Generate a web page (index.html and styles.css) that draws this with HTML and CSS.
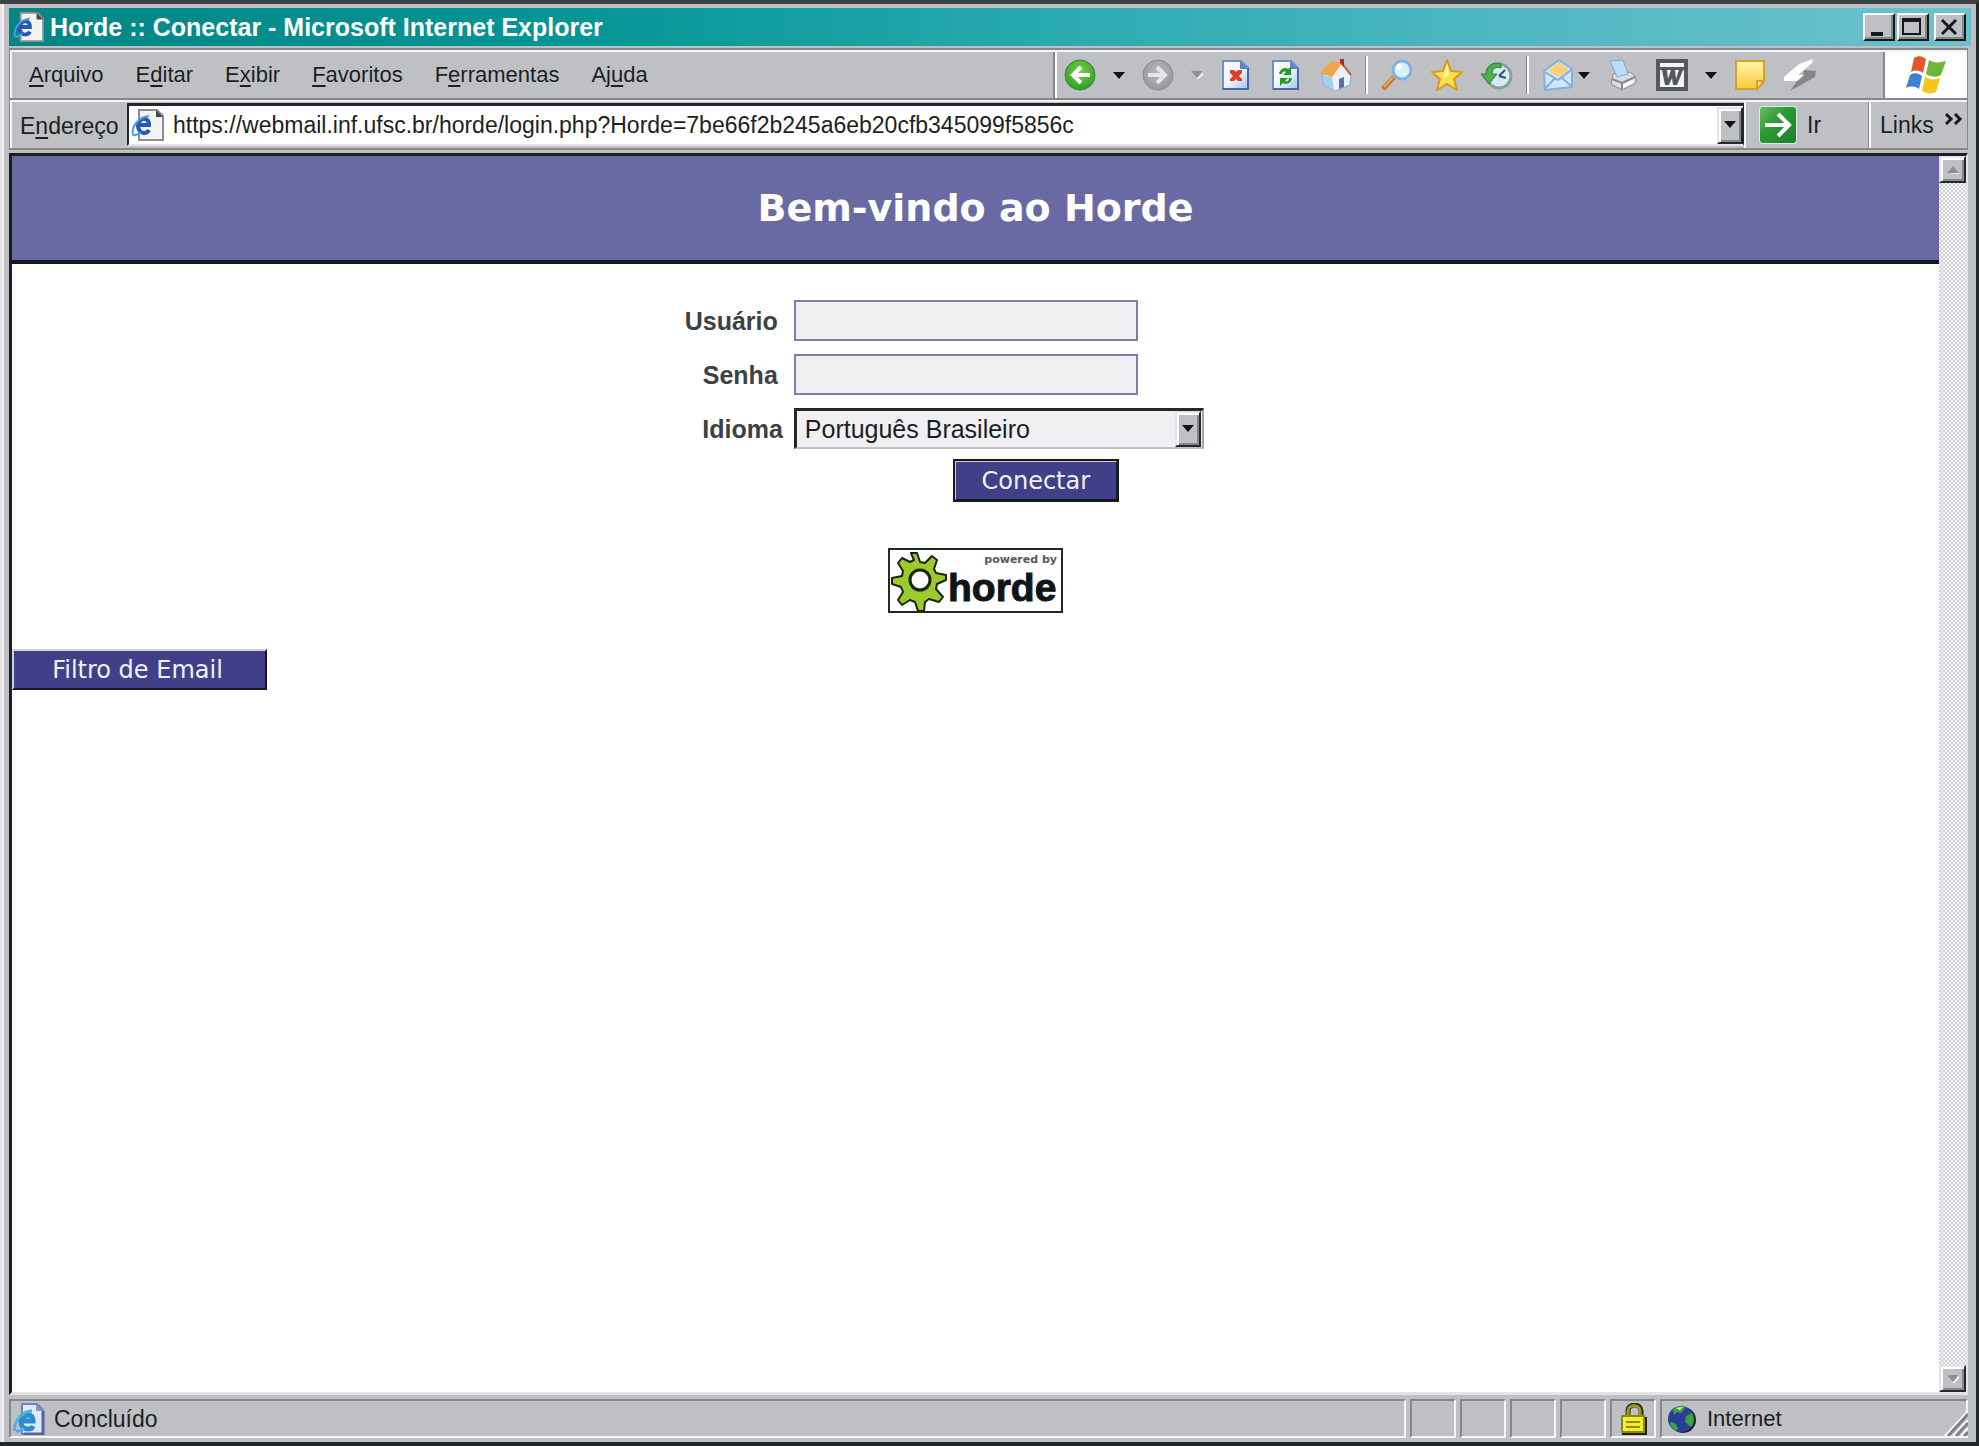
FILE: index.html
```html
<!DOCTYPE html>
<html lang="pt-BR">
<head>
<meta charset="utf-8">
<title>Horde :: Conectar - Microsoft Internet Explorer</title>
<link rel="stylesheet" href="styles.css">
</head>
<body>
<svg class="defs" aria-hidden="true">
  <defs>
    <linearGradient id="sheet" x1="0" y1="0" x2="1" y2="1"><stop offset="0" stop-color="#fff"/><stop offset=".5" stop-color="#f2f7fd"/><stop offset="1" stop-color="#9cc4f0"/></linearGradient>
    <radialGradient id="green" cx=".5" cy=".35" r=".7"><stop offset="0" stop-color="#6fd04a"/><stop offset="1" stop-color="#2c9a22"/></radialGradient>
    <radialGradient id="grey" cx=".5" cy=".4" r=".7"><stop offset="0" stop-color="#b8b9bc"/><stop offset="1" stop-color="#919296"/></radialGradient>
    <linearGradient id="gold" x1="0" y1="0" x2="0" y2="1"><stop offset="0" stop-color="#fff7a8"/><stop offset="1" stop-color="#f8c83c"/></linearGradient>
    <linearGradient id="go" x1="0" y1="0" x2="1" y2="1"><stop offset="0" stop-color="#6db96a"/><stop offset=".4" stop-color="#2f9a35"/><stop offset="1" stop-color="#1d7f28"/></linearGradient>
    <symbol id="page-e" viewBox="0 0 34 34">
      <path d="M8 2h18l6 6v24H8z" fill="#f4f4ee" stroke="#8b8d90" stroke-width="2"/>
      <path d="M25 2v7h7z" fill="#45494c"/>
      <path d="M7 17h11c0-4-2-6-5-6s-6 3-6 7 3 7 6 7 4-1 5-3" fill="none" stroke="#2557b4" stroke-width="4"/>
      <path d="M2 27C0 18 8 9 18 8M2 27c3 1 6-1 8-3" fill="none" stroke="#4d9be4" stroke-width="2"/>
    </symbol>
    <symbol id="page-blue" viewBox="0 0 32 32">
      <path d="M3 2h18l7 7v21H3z" fill="url(#sheet)" stroke="#6a8fd0" stroke-width="2"/>
      <path d="M28 9v21H3" fill="none" stroke="#4d66b0" stroke-width="2"/>
      <path d="M20 2v8h8z" fill="#5f7fc6"/>
    </symbol>
  </defs>
</svg>

<div class="window">
  <header class="titlebar">
    <svg class="title-icon" viewBox="0 0 34 34"><use href="#page-e"/></svg>
    <span class="title-text">Horde :: Conectar - Microsoft Internet Explorer</span>
    <div class="window-buttons">
      <button class="win-button" type="button" aria-label="Minimizar"><svg viewBox="0 0 26 22"><path d="M6 16h12v4H6z" fill="#16191c"/></svg></button>
      <button class="win-button" type="button" aria-label="Maximizar"><svg viewBox="0 0 26 22"><path d="M4 3h17v15H4z" fill="none" stroke="#16191c" stroke-width="2"/><path d="M3 2h19v4H3z" fill="#16191c"/></svg></button>
      <button class="win-button win-close" type="button" aria-label="Fechar"><svg viewBox="0 0 26 22"><path d="M6 4l14 14M20 4L6 18" stroke="#16191c" stroke-width="3"/></svg></button>
    </div>
  </header>

  <div class="bars">
    <div class="bar-row menu-row">
      <nav class="menu">
        <a href="#"><u>A</u>rquivo</a>
        <a href="#">E<u>d</u>itar</a>
        <a href="#">E<u>x</u>ibir</a>
        <a href="#"><u>F</u>avoritos</a>
        <a href="#">F<u>e</u>rramentas</a>
        <a href="#">Aj<u>u</u>da</a>
      </nav>
      <div class="toolbar">
        <button class="tool" type="button" aria-label="Voltar"><svg viewBox="0 0 32 32"><circle cx="16" cy="16" r="15" fill="url(#green)" stroke="#2c8a2a"/><path d="M26 16H9M17 8l-8 8 8 8" fill="none" stroke="#fff" stroke-width="4"/></svg></button>
        <button class="drop" type="button" aria-label="Histórico de voltar"><svg viewBox="0 0 14 8"><path d="M1 1h12L7 8z" fill="#111417"/></svg></button>
        <button class="tool" type="button" aria-label="Avançar"><svg viewBox="0 0 32 32"><circle cx="16" cy="16" r="15" fill="url(#grey)" stroke="#8b8c90"/><path d="M6 16h17M15 8l8 8-8 8" fill="none" stroke="#e6e6e9" stroke-width="4"/></svg></button>
        <button class="drop" type="button" aria-label="Histórico de avançar"><svg viewBox="0 0 14 8"><path d="M13 2v2L8 8H6z" fill="#fff"/><path d="M1 0h11L7 7z" fill="#8e8f92"/></svg></button>
        <div class="tool-group">
          <button class="tool" type="button" aria-label="Parar"><svg viewBox="0 0 32 32"><use href="#page-blue"/><path d="M10 11h4l2 2 2-2h4v3l-3 3 3 3v2h-4l-2-2-2 2h-4v-2l3-3-3-3z" fill="#dc3f26"/></svg></button>
          <button class="tool" type="button" aria-label="Atualizar"><svg viewBox="0 0 32 32"><use href="#page-blue"/><path d="M9 15c1-6 7-7 9-5l3-2v8h-8l3-3c-2-1-4 0-4 2zM22 19c-1 6-7 7-9 5l-3 3v-8h8l-3 3c2 1 4 0 4-3z" fill="#28992f"/></svg></button>
          <button class="tool" type="button" aria-label="Página inicial"><svg viewBox="0 0 32 32"><path d="M2 15l9 1 10-12 10 13-1 9-15 6-11-6z" fill="#e9f1fb" stroke="#7fa9d6"/><path d="M3 16l9 2 2 13-10-6z" fill="#9fd0ee"/><path d="M0 14L11 2l11 2-10 14z" fill="#f2a545"/><path d="M21 3l10 13" stroke="#b9602c" stroke-width="2"/><path d="M20 0h4v8l-4-4z" fill="#b03022"/><path d="M19 20l5-2v10l-5 2z" fill="#5b6fae"/></svg></button>
        </div>
        <span class="tool-sep"></span>
        <div class="tool-group">
          <button class="tool" type="button" aria-label="Pesquisar"><svg viewBox="0 0 32 32"><path d="M2 30l11-12" stroke="#c7763a" stroke-width="5"/><path d="M3 28l9-10" stroke="#eaa768" stroke-width="2"/><circle cx="21" cy="11" r="9" fill="#d4f1fc" stroke="#86aede" stroke-width="3"/><circle cx="18" cy="8" r="3" fill="#fff"/></svg></button>
          <button class="tool" type="button" aria-label="Favoritos"><svg viewBox="0 0 32 32"><path d="M16 1l4 11 11 1-8 7 3 11-10-6-10 6 3-11-8-7 11-1z" fill="#ffe24a" stroke="#d99a23" stroke-width="2"/><path d="M16 5l2 10-6 5z" fill="#fff9b8"/></svg></button>
          <button class="tool" type="button" aria-label="Histórico"><svg viewBox="0 0 32 32"><circle cx="18" cy="17" r="12" fill="#d2ecf7" stroke="#8d9ca6" stroke-width="3"/><path d="M18 17l6-6M18 17l7 2" stroke="#36536b" stroke-width="2"/><path d="M20 5C12 2 5 7 5 15H0l8 10 8-10h-5c0-5 4-8 9-6z" fill="#4fb04a" stroke="#2a7e35"/></svg></button>
        </div>
        <span class="tool-sep"></span>
        <button class="tool" type="button" aria-label="Correio"><svg viewBox="0 0 32 32"><path d="M2 12L17 1l13 9v18L3 31z" fill="#cfe6fa" stroke="#86aede" stroke-width="2"/><path d="M6 12L17 3l10 8-11 7z" fill="#f8d078"/><path d="M3 13l13 8 13-10M3 30l10-11M29 27l-10-9" fill="none" stroke="#86aede" stroke-width="2"/></svg></button>
        <button class="drop drop-near" type="button" aria-label="Opções de correio"><svg viewBox="0 0 14 8"><path d="M1 1h12L7 8z" fill="#111417"/></svg></button>
        <div class="tool-group">
          <button class="tool" type="button" aria-label="Imprimir"><svg viewBox="0 0 32 32"><path d="M7 15l17-2 6 5v6l-14 7-11-6z" fill="#dcdde0" stroke="#8a8b8f"/><path d="M4 2l13-1 5 14-11 3z" fill="#b9ddfa" stroke="#79a6dd"/><path d="M6 20l10 4 13-6M16 24v6" fill="none" stroke="#8a8b8f" stroke-width="2"/><path d="M17 26l10-5v3l-10 5z" fill="#fff"/></svg></button>
          <button class="tool" type="button" aria-label="Editar com Word"><svg viewBox="0 0 32 32"><path d="M0 0h32v32H0z" fill="#55595c"/><path d="M4 4h24v4H4zM4 11h24v17H4z" fill="#f4f4f6"/><path d="M6 11h5l1 9 3-9h4l1 9 3-9h4l-6 15h-4l-1-7-3 7H9z" fill="#55595c"/></svg></button>
        </div>
        <button class="drop" type="button" aria-label="Opções de edição"><svg viewBox="0 0 14 8"><path d="M1 1h12L7 8z" fill="#111417"/></svg></button>
        <div class="tool-group">
          <button class="tool" type="button" aria-label="Discutir"><svg viewBox="0 0 32 32"><path d="M2 2h28v21l-7 7H2z" fill="url(#gold)" stroke="#d8a02c" stroke-width="2"/><path d="M30 22h-7v8z" fill="#fff2a0" stroke="#d8a02c" stroke-width="2"/></svg></button>
          <button class="tool" type="button" aria-label="Messenger"><svg viewBox="0 0 32 32"><path d="M20 11l12 1-1 6L6 32l7-10 6-5z" fill="#85868a"/><path d="M29 0L15 5 0 18v4h13l7-6h-6L28 4z" fill="#fff"/></svg></button>
        </div>
      </div>
      <div class="brand">
        <svg viewBox="0 0 42 38"><path d="M9 2c4-3 9-2 12 1l-3 14c-4-3-8-3-12-1z" fill="#e4572e"/><path d="M24 4c5 3 9 3 17 1l-5 14c-5 3-10 2-15-1z" fill="#6fb638"/><path d="M5 19c4-3 9-2 12 1l-3 13c-4-3-8-3-13-1z" fill="#3f80d2"/><path d="M20 21c5 3 9 3 15 1l-4 14c-5 2-9 2-14-1z" fill="#f9c31d"/></svg>
      </div>
    </div>

    <form class="bar-row address-row" onsubmit="return false">
      <label class="address-label" for="address">E<u>n</u>dereço</label>
      <div class="address-box">
        <svg class="address-icon" viewBox="0 0 34 34"><use href="#page-e"/></svg>
        <input class="address-input" id="address" type="text" value="https://webmail.inf.ufsc.br/horde/login.php?Horde=7be66f2b245a6eb20cfb345099f5856c">
        <button class="bevel combo-button" type="button" aria-label="Mostrar endereços"><svg class="combo-arrow" viewBox="0 0 12 8"><path d="M0 0h12L6 7z" fill="#111417"/></svg></button>
      </div>
      <button class="go-button" type="submit"><svg viewBox="0 0 40 40"><rect x="1" y="1" width="38" height="38" rx="4" fill="#dcecdc"/><rect x="2" y="2" width="36" height="36" rx="3" fill="url(#go)"/><path d="M7 20h23M20 9l11 11-11 11" fill="none" stroke="#fff" stroke-width="4"/></svg>Ir</button>
      <a class="links" href="#">Links<svg viewBox="0 0 18 12"><path d="M1 1l5 5-5 5M10 1l5 5-5 5" fill="none" stroke="#16191c" stroke-width="3"/></svg></a>
    </form>
  </div>

  <div class="viewport">
    <main class="page">
      <h1 class="banner">Bem-vindo ao Horde</h1>
      <form class="login" onsubmit="return false">
        <label class="login-label spaced" for="user">Usuário</label>
        <input class="field" id="user" type="text">
        <label class="login-label spaced" for="pass">Senha</label>
        <input class="field" id="pass" type="password">
        <label class="login-label" for="lang">Idioma</label>
        <div class="language">
          <select class="language-select" id="lang"><option>Português Brasileiro</option></select>
          <span class="bevel language-arrow"><svg class="combo-arrow" viewBox="0 0 12 8"><path d="M0 0h12L6 7z" fill="#111417"/></svg></span>
        </div>
        <button class="page-button connect" type="submit">Conectar</button>
      </form>
      <a class="powered" href="#">
        <svg class="powered-gear" viewBox="0 0 58 61">
          <path d="M21 3h6l3 9 5 1 7-7 5 4-3 9 2 4 10 2v5l-9 4-1 5 7 8-4 5-10-3-4 3-1 9h-6l-3-9-5-2-8 5-4-5 5-8-2-5-9-3v-6l10-2 1-5-5-8 4-5 8 4 4-2z" fill="#9aca2b" stroke="#1b2410" stroke-width="2" stroke-linejoin="round"/>
          <circle cx="30" cy="30" r="10" fill="#fff" stroke="#1b2410" stroke-width="3"/>
        </svg>
        <span class="powered-words">
          <span class="powered-small">powered by</span>
          <span class="powered-name">horde</span>
        </span>
      </a>
      <button class="page-button filter" type="button">Filtro de Email</button>
    </main>
    <div class="scrollbar">
      <button class="bevel scroll-button" type="button" aria-label="Rolar para cima"><svg class="combo-arrow" viewBox="0 0 12 8"><path d="M1 8h11V7z" fill="#fff"/><path d="M0 7h12L6 0z" fill="#8e8f92"/></svg></button>
      <button class="bevel scroll-button" type="button" aria-label="Rolar para baixo"><svg class="combo-arrow" viewBox="0 0 12 8"><path d="M12 1v2L7 8H5z" fill="#fff"/><path d="M0 0h11L6 7z" fill="#8e8f92"/></svg></button>
    </div>
  </div>

  <footer class="status">
    <div class="status-cell status-main">
      <svg class="status-icon" viewBox="0 0 32 32"><path d="M9 1h15l6 6v24H9z" fill="#dceafd" stroke="#6d83bd" stroke-width="2"/><path d="M30 8v23H11" fill="none" stroke="#56659b" stroke-width="3"/><path d="M23 1v7h7z" fill="#7f95cc"/><path d="M8 18h12c0-4-2-6-5-6s-7 3-7 7 3 7 7 7 4-1 5-3" fill="none" stroke="#2a8ccb" stroke-width="5"/><path d="M2 28C0 19 9 8 19 8M3 28c3 1 6-1 8-3" fill="none" stroke="#4fb1e6" stroke-width="3"/></svg>
      Concluído
    </div>
    <div class="status-cell"></div>
    <div class="status-cell"></div>
    <div class="status-cell"></div>
    <div class="status-cell"></div>
    <div class="status-cell">
      <svg class="status-icon" viewBox="0 0 32 32"><path d="M10 16V8c0-8 13-8 13 0v8" fill="none" stroke="#33340f" stroke-width="5"/><path d="M10 16V8c0-7 12-7 12 0v8" fill="none" stroke="#9c962b" stroke-width="3"/><path d="M4 14h25v18H4z" fill="#22240f"/><path d="M4 13h22v16H4z" fill="#f4ee22" stroke="#8d8820" stroke-width="2"/><path d="M8 19h14M8 24h14" stroke="#8d8820" stroke-width="2"/></svg>
    </div>
    <div class="status-cell status-zone">
      <svg class="status-icon" viewBox="0 0 32 32"><circle cx="17" cy="17" r="13" fill="#1e1f3c"/><circle cx="15" cy="16" r="13" fill="#2b3e97"/><path d="M7 7c4-5 10-5 13-3l-5 6-4-1-3 3zM20 13l6-3c3 6 2 11-1 14l-6-5zM4 19l5 1 3 5-2 3c-4-2-6-5-6-9z" fill="#35a53c"/><path d="M10 5l7-1-3 3z" fill="#d8efe0"/></svg>
      Internet
      <svg class="grip" viewBox="0 0 24 28"><path d="M0 28L24 2v26z" fill="#bfc0c4"/><path d="M1 28L24 3M9 28L24 12M17 28l7-8" stroke="#fff" stroke-width="2"/><path d="M4 28L24 6M12 28l12-13M20 28l4-4" stroke="#808286" stroke-width="3"/></svg>
    </div>
  </footer>
</div>
</body>
</html>
```

FILE: styles.css
```css
* { box-sizing: border-box; }

body {
  margin: 0;
  background: #bfc0c4;
  color: #1b1f23;
  font: 22px/28px "Liberation Sans", Arial, sans-serif;
}

button, input, select { margin: 0; padding: 0; font: inherit; color: inherit; border-radius: 0; }
button { border: 0; background: none; }
a { color: inherit; text-decoration: none; }
u { text-decoration-thickness: 2px; text-underline-offset: 3px; text-decoration-skip-ink: none; }
svg { display: block; flex: none; }
.defs { position: absolute; width: 0; height: 0; }

.window {
  display: flex;
  flex-direction: column;
  min-height: 100vh;
  padding: 4px 5px 4px 9px;
  border: solid #22282c;
  border-width: 4px 3px 4px 0;
  border-top-color: #3b4347;
  box-shadow: inset 2px 0 #e4e4e8, inset 4px 0 #f4f4f7;
}

/* Raised grey box shared by small buttons */
.bevel {
  display: flex;
  align-items: center;
  justify-content: center;
  background: #bfc0c4;
  border: 2px solid;
  border-color: #e4e4e8 #22282c #22282c #e4e4e8;
  box-shadow: inset 2px 2px #fff, inset -2px -2px #85888b;
}
.combo-arrow { width: 12px; height: 8px; }

/* Title bar */
.titlebar {
  display: flex;
  align-items: center;
  height: 38px;
  padding: 0 5px 0 4px;
  background: linear-gradient(90deg, #028684 0%, #059696 30%, #2cabb2 55%, #4eb7c2 76%, #6cc2cd 100%);
  color: #fff;
}
.title-icon { width: 32px; height: 32px; }
.title-text { flex: 1; padding-left: 5px; font-size: 25px; font-weight: bold; white-space: nowrap; }
.window-buttons { display: flex; gap: 2px; }
.win-button {
  width: 32px;
  height: 28px;
  background: #bfc0c4;
  border: 2px solid;
  border-color: #fff #16191c #16191c #fff;
  box-shadow: inset -2px -2px #85888b;
}
.win-button svg { width: 26px; height: 22px; }
.win-close { margin-left: 3px; }

/* Menu and tool bars */
.bars { margin: 2px 3px 0 0; border: solid #85888b; border-width: 2px 1px 0 1px; }
.bar-row { display: flex; border: solid #85888b; border-width: 0 0 2px; box-shadow: inset 2px 2px #f4f4f7; }
.menu-row { height: 50px; padding-top: 2px; }
.menu { display: flex; flex: 1; align-items: center; gap: 32px; padding-left: 19px; }

.toolbar {
  display: flex;
  align-items: center;
  width: 832px;
  padding-left: 9px;
  border: solid #85888b;
  border-width: 0 2px;
  box-shadow: inset 2px 0 #fff;
}
.tool-group { display: flex; gap: 18px; }
.tool { width: 32px; height: 32px; }
.tool svg { width: 32px; height: 32px; }
.drop { display: flex; justify-content: center; width: 46px; padding: 12px 0; }
.drop svg { width: 14px; height: 8px; }
.drop-near { width: 32px; padding-right: 12px; }
.tool-sep { width: 3px; height: 38px; margin: 0 13px; border-left: 1px solid #85888b; background: #fff; }
.brand { display: flex; align-items: center; justify-content: center; width: 82px; background: #fff; }
.brand svg { width: 42px; height: 38px; }

.address-row { height: 50px; padding-top: 2px; align-items: stretch; font-size: 23px; }
.address-label { width: 117px; padding: 10px 0 0 10px; }
.address-box {
  display: flex;
  flex: 1;
  align-items: center;
  margin: 1px 0 2px;
  padding-left: 2px;
  background: #fff;
  border: solid #22282c;
  border-width: 3px 1px 2px 2px;
  border-bottom-color: #e4e4e8;
}
.address-icon { width: 34px; height: 34px; }
.address-input { flex: 1; min-width: 0; height: 36px; padding: 0 0 0 8px; border: 0; outline: 0; background: #fff; }
.combo-button { width: 26px; height: 37px; }
.go-button { display: flex; align-items: center; gap: 9px; width: 125px; padding-left: 12px; border-left: 2px solid #f4f4f7; border-right: 1px solid #85888b; }
.go-button svg { width: 40px; height: 40px; }
.links { display: flex; gap: 11px; width: 98px; padding: 9px 0 0 9px; border-left: 2px solid #fff; }
.links svg { width: 18px; height: 12px; margin-top: 2px; }

/* Document area */
.viewport {
  display: flex;
  flex: 1;
  margin: 3px 3px 0 0;
  background: #fff;
  border: 3px solid #1b1f23;
  border-right: 2px solid #e4e4e8;
  border-bottom-color: #e4e4e8;
}
.page { flex: 1; }
.banner {
  margin: 0;
  padding: 28px 0;
  background: #696aa4;
  border-bottom: 4px solid #16191c;
  color: #fff;
  font: bold 38px/48px "DejaVu Sans", Verdana, sans-serif;
  text-align: center;
}
.login { display: grid; grid-template-columns: 40% 1fr; gap: 13px 11px; align-items: center; justify-items: start; padding-top: 36px; }
.login-label { justify-self: end; color: #3b4145; font-size: 25px; font-weight: bold; }
.spaced { padding-right: 5px; }
.field { width: 344px; height: 41px; padding: 0 6px; background: #f0f0f3; border: 2px solid #7b7cb0; outline: 0; }
.language { position: relative; }
.language-select {
  display: block;
  appearance: none;
  width: 410px;
  height: 41px;
  padding: 0 36px 0 8px;
  background: #f0f0f3;
  border: 3px solid #22282c;
  border-right: 2px solid #a5a6aa;
  border-bottom: 2px solid #bfc0c4;
  color: #1b1f23;
  font-size: 25px;
}
.language-arrow { position: absolute; top: 3px; right: 3px; bottom: 2px; width: 26px; pointer-events: none; }
.page-button {
  height: 41px;
  background: #403f88;
  border: 2px solid;
  border-color: #d0d0d8 #16191c #16191c #d0d0d8;
  color: #f0f0fa;
  font: 24px/28px "DejaVu Sans", Verdana, sans-serif;
}
.connect { grid-column: 2; width: 164px; margin: -2px 0 0 160px; outline: 2px solid #16191c; outline-offset: -1px; }
.powered { display: flex; width: 175px; height: 65px; margin: 47px auto 0; border: 2px solid #22282c; }
.powered-gear { width: 58px; height: 61px; }
.powered-words { display: flex; flex: 1; flex-direction: column; }
.powered-small { padding-right: 4px; color: #55595c; font: bold 11px/20px "DejaVu Sans", sans-serif; text-align: right; }
.powered-name { color: #111417; font: bold 39px/36px "Liberation Sans", Arial, sans-serif; -webkit-text-stroke: 1px #111417; }
.filter { display: block; width: 255px; margin-top: 36px; padding-right: 4px; }

.scrollbar {
  display: flex;
  flex-direction: column;
  justify-content: space-between;
  width: 27px;
  background: repeating-conic-gradient(#d0d1d5 0 25%, #f4f4f7 0 50%) 0 0 / 4px 4px;
}
.scroll-button { width: 27px; height: 27px; }

/* Status bar */
.status { display: flex; gap: 4px; height: 39px; margin: 4px 3px 0 0; }
.status-cell {
  display: flex;
  align-items: center;
  width: 46px;
  padding-left: 6px;
  border: 2px solid;
  border-color: #85888b #f4f4f7 #f4f4f7 #85888b;
}
.status-main { flex: 1; gap: 9px; padding-left: 2px; font-size: 23px; }
.status-zone { width: 308px; gap: 9px; padding-left: 4px; }
.status-icon { width: 32px; height: 32px; }
.grip { width: 24px; height: 28px; margin: 6px -2px 0 auto; }
```
